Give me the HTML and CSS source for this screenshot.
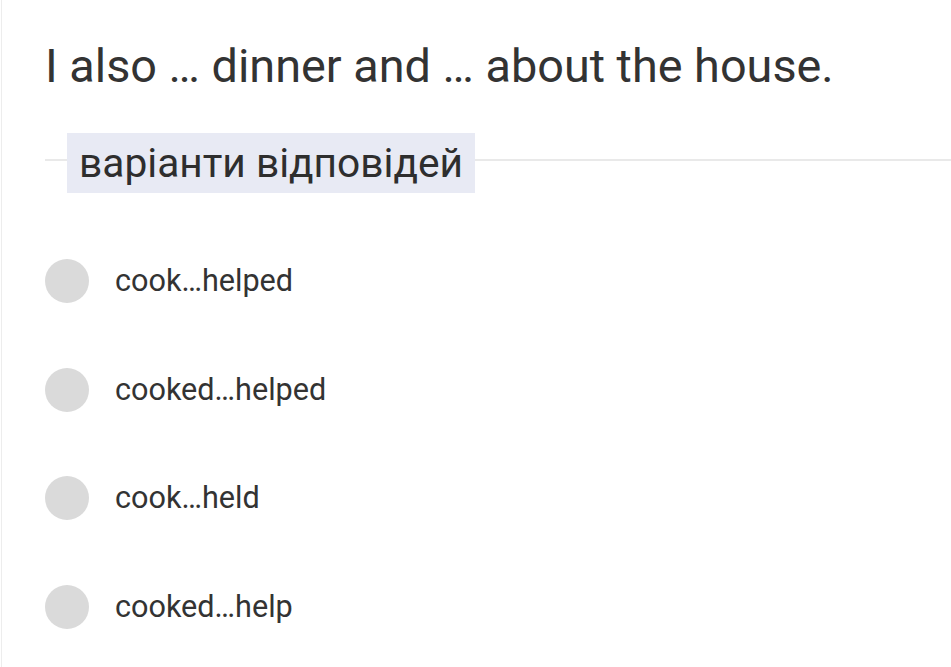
FILE: index.html
```html
<!DOCTYPE html>
<html lang="uk">
<head>
<meta charset="utf-8">
<link rel="stylesheet" href="styles.css">
</head>
<body>
<div class="page">
  <h1 class="question">I also … dinner and … about the house.</h1>
  <div class="divider">
    <span class="label">варіанти відповідей</span>
  </div>
  <ul class="options">
    <li class="option"><span class="radio"></span><span class="text">cook…helped</span></li>
    <li class="option"><span class="radio"></span><span class="text">cooked…helped</span></li>
    <li class="option"><span class="radio"></span><span class="text">cook…held</span></li>
    <li class="option"><span class="radio"></span><span class="text">cooked…help</span></li>
  </ul>
</div>
</body>
</html>
```

FILE: styles.css
```css
html, body {
  margin: 0;
  padding: 0;
  background: #ffffff;
}

body {
  font-family: Roboto, "Noto Sans", Arial, sans-serif;
  color: #333333;
}

.page {
  min-height: 667px;
  box-sizing: border-box;
  margin-left: 1px;
  border-left: 1px solid #ededed;
  padding: 38px 0 0 43px;
}

.question {
  margin: 0;
  font-size: 46.8px;
  font-weight: 400;
  line-height: 56px;
  color: #333333;
}

.divider {
  display: flex;
  align-items: center;
  margin-top: 39px;
}

.divider::before {
  content: "";
  width: 22px;
  height: 2px;
  background: #e9e9e9;
  margin-top: -7px;
}

.divider::after {
  content: "";
  flex: 1;
  height: 2px;
  background: #e9e9e9;
  margin-top: -7px;
}

.label {
  display: block;
  background: #e8eaf4;
  padding: 0 12px;
  font-size: 40.7px;
  line-height: 60px;
  color: #2e2e2e;
  white-space: nowrap;
}

.options {
  list-style: none;
  margin: 66px 0 0 0;
  padding: 0;
  display: flex;
  flex-direction: column;
  gap: 64.5px;
}

.option {
  display: flex;
  align-items: center;
  gap: 26px;
  height: 44px;
}

.radio {
  width: 44px;
  height: 44px;
  border-radius: 50%;
  background: #dadada;
  flex: none;
}

.text {
  font-size: 30.6px;
  line-height: 44px;
  color: #333333;
}
```
